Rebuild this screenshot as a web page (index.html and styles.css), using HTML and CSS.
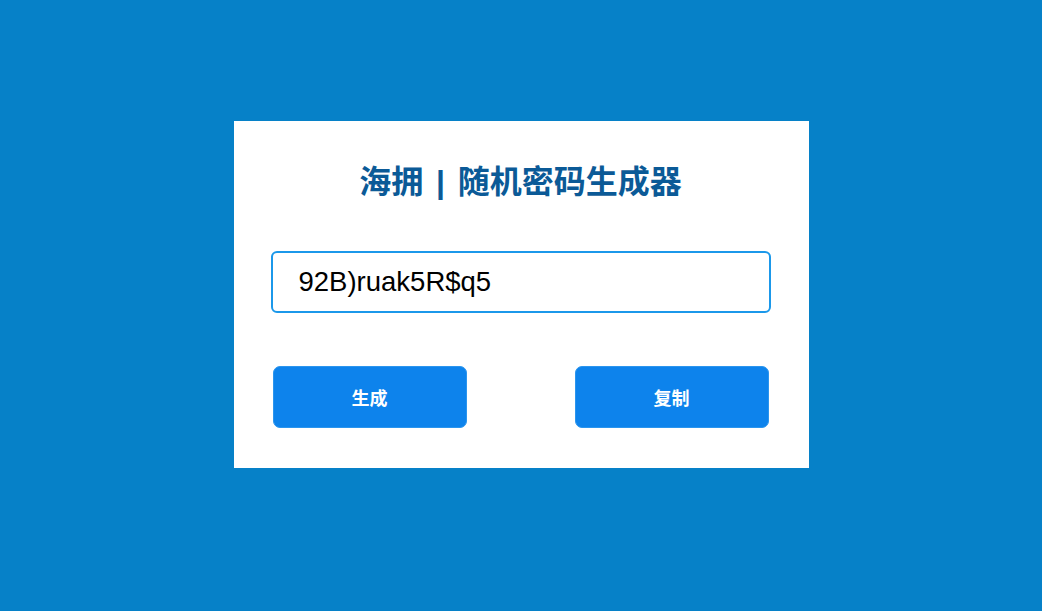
FILE: index.html
```html
<!DOCTYPE html>
<html lang="zh">
<head>
<meta charset="utf-8">
<title>随机密码生成器</title>
<link rel="stylesheet" href="styles.css">
</head>
<body>
<div class="card">
  <h1 class="title">海拥 | 随机密码生成器</h1>
  <input class="pwd" type="text" value="92B)ruak5R$q5" readonly>
  <div class="actions">
    <button class="btn">生成</button>
    <button class="btn">复制</button>
  </div>
</div>
</body>
</html>
```
FILE: styles.css
```css
html, body {
  margin: 0;
  padding: 0;
}
body {
  background: #0681c8;
  width: 1042px;
  height: 611px;
  overflow: hidden;
  font-family: "Liberation Sans", Arial, "Noto Sans CJK SC", sans-serif;
}
.card {
  box-sizing: border-box;
  width: 575px;
  height: 347px;
  margin: 121px auto 0;
  background: #ffffff;
  padding: 41px 38px 40px 37px;
  display: flex;
  flex-direction: column;
}
.title {
  margin: 0 0 49px;
  height: 40px;
  line-height: 40px;
  font-size: 32px;
  font-weight: bold;
  color: #0b5a97;
  text-align: center;
  word-spacing: 4px;
  font-family: "Liberation Sans", "Noto Sans CJK SC", sans-serif;
}
.pwd {
  box-sizing: border-box;
  width: 500px;
  height: 62px;
  margin: 0 0 53px;
  border: 2px solid #1b98ea;
  border-radius: 6px;
  padding: 0 26px;
  font-family: "Liberation Sans", Arial, sans-serif;
  font-size: 27.5px;
  color: #000;
  outline: none;
  background: #fff;
}
.actions {
  display: flex;
  justify-content: space-between;
  padding: 0 2px 0 2px;
}
.btn {
  width: 194px;
  height: 62px;
  border: 1px solid #2b95ee;
  border-radius: 7px;
  background: #0d83ec;
  color: #fff;
  font-size: 18px;
  font-weight: bold;
  font-family: "Liberation Sans", "Noto Sans CJK SC", sans-serif;
  cursor: pointer;
}
```
